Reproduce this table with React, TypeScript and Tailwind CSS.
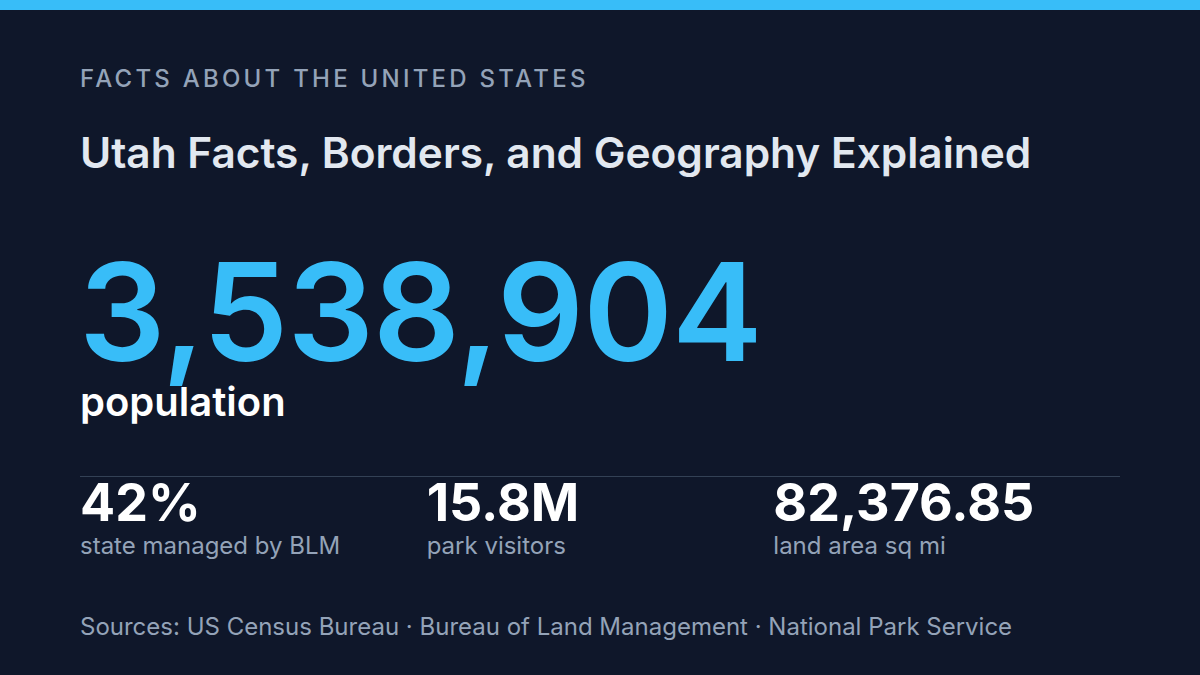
import React from 'react';

interface Stat {
  value: string;
  label: string;
}

const stats: Stat[] = [
  { value: '42%', label: 'state managed by BLM' },
  { value: '15.8M', label: 'park visitors' },
  { value: '82,376.85', label: 'land area sq mi' },
];

const StatItem: React.FC<{ stat: Stat }> = ({ stat }) => (
  <div className="flex flex-col">
    <div className="text-[52px] leading-none font-bold text-white">{stat.value}</div>
    <div className="mt-[5px] text-[24px] leading-none text-[#94a3b8]">{stat.label}</div>
  </div>
);

export default function App() {
  return (
    <div
      className="w-[1200px] h-[675px] bg-[#0f172a] flex flex-col overflow-hidden"
      style={{ fontFamily: 'Inter, "Noto Sans", sans-serif' }}
    >
      <div className="h-[10px] bg-[#38bdf8] shrink-0" />

      <div className="flex flex-col px-[80px] pt-[57px]">
        <div className="text-[24px] leading-none font-medium tracking-[0.135em] text-[#94a3b8]">
          FACTS ABOUT THE UNITED STATES
        </div>

        <h1 className="mt-[41px] text-[42.4px] leading-none font-semibold text-[#e2e8f0]">
          Utah Facts, Borders, and Geography Explained
        </h1>

        <div className="mt-[70px] text-[136px] leading-none font-semibold tracking-[-0.007em] text-[#38bdf8] -ml-[1px]">
          3,538,904
        </div>

        <div className="mt-[2px] text-[40px] leading-none font-semibold text-white">
          population
        </div>

        <div className="mt-[54px] border-t border-[#334155] grid grid-cols-3">
          {stats.map((stat) => (
            <StatItem key={stat.label} stat={stat} />
          ))}
        </div>

        <div className="mt-[57px] text-[24px] leading-none text-[#94a3b8]">
          Sources: US Census Bureau · Bureau of Land Management · National Park Service
        </div>
      </div>
    </div>
  );
}
